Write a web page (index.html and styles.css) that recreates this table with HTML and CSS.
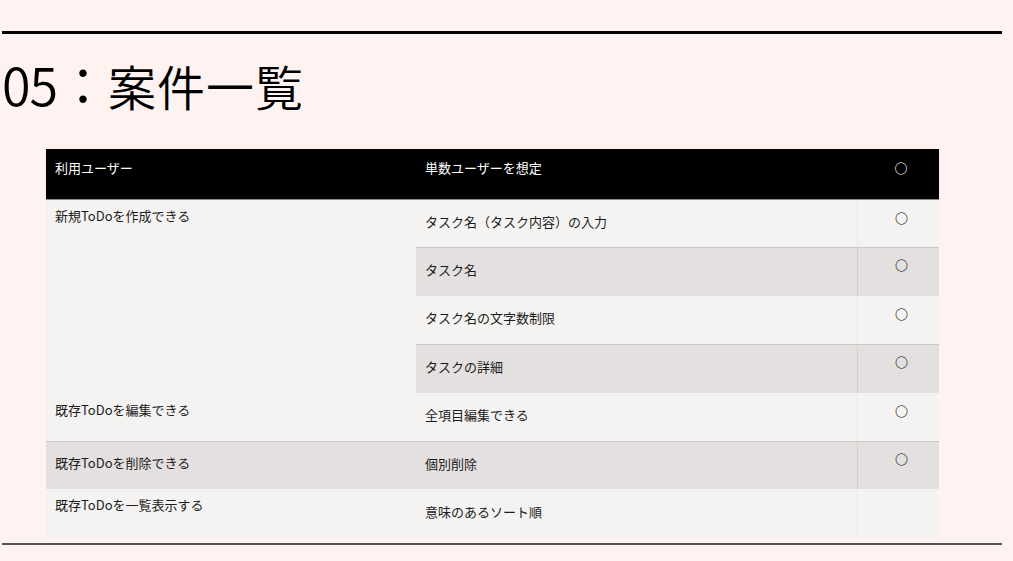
FILE: index.html
```html
<!DOCTYPE html>
<html lang="ja">
<head>
<meta charset="utf-8">
<title>05：案件一覧</title>
<link rel="stylesheet" href="styles.css">
</head>
<body>
<div class="page">
  <div class="rule-top"></div>
  <h1 class="title"><span class="num">05：</span>案件一覧</h1>
  <div class="grid">
    <div class="cell head c1">利用ユーザー</div>
    <div class="cell head c2">単数ユーザーを想定</div>
    <div class="cell head c3">○</div>

    <div class="cell light c1 span4">新規ToDoを作成できる</div>
    <div class="cell light c2">タスク名（タスク内容）の入力</div>
    <div class="cell light c3">○</div>

    <div class="cell dark c2">タスク名</div>
    <div class="cell dark c3">○</div>

    <div class="cell light c2">タスク名の文字数制限</div>
    <div class="cell light c3">○</div>

    <div class="cell dark c2">タスクの詳細</div>
    <div class="cell dark c3">○</div>

    <div class="cell light c1 lower">既存ToDoを編集できる</div>
    <div class="cell light c2">全項目編集できる</div>
    <div class="cell light c3">○</div>

    <div class="cell dark c1 mid">既存ToDoを削除できる</div>
    <div class="cell dark c2">個別削除</div>
    <div class="cell dark c3">○</div>

    <div class="cell light c1">既存ToDoを一覧表示する</div>
    <div class="cell light c2 last">意味のあるソート順</div>
    <div class="cell light c3"></div>
  </div>
  <div class="rule-bottom"></div>
</div>
</body>
</html>
```

FILE: styles.css
```css
html, body {
  margin: 0;
  padding: 0;
  background: #fef3f1;
}

body {
  font-family: "Noto Sans CJK JP", "Noto Sans", sans-serif;
  color: #000;
}

.page {
  width: 1000px;
  padding: 31px 0 0 2px;
}

.rule-top {
  height: 3px;
  background: #000;
}

.title {
  margin: 22px 0 0 0;
  height: 58px;
  font-size: 48px;
  font-weight: 350;
  line-height: 58px;
  letter-spacing: 1px;
  white-space: nowrap;
}

.num {
  font-size: 52px;
  line-height: 0;
  letter-spacing: -1px;
}

.grid {
  margin: 35px 0 0 44px;
  display: grid;
  grid-template-columns: 370px 441px 82px;
  grid-template-rows: 51px 47px 49px 48px 49px 48px 48px 48px;
  font-size: 13px;
  line-height: 19px;
  color: #1c1c1c;
}

.cell {
  box-sizing: border-box;
  padding: 12px 9px 0 9px;
  white-space: nowrap;
}

.head {
  background: #000;
  color: #fff;
  padding-top: 9px;
  border-bottom: 1px solid #8a8886;
}

.light {
  background: #f4f3f1;
}

.dark {
  background: #e3e0df;
  border-top: 1px solid #c9c6c4;
}

.c1 {
  padding-top: 6px;
}

.c1.head {
  padding-top: 9px;
}

.c1.lower {
  padding-top: 7px;
}

.c1.mid {
  padding-top: 11px;
}

.span4 {
  grid-row: span 4;
}

.c2.last {
  padding-top: 13px;
}

.c3 {
  text-align: center;
  padding: 8px 0 0 6px;
  border-left: 1px solid #ebe9e7;
  color: #000;
  font-weight: 700;
}

.c3.head {
  padding-top: 9px;
  border-left: none;
  color: #fff;
}

.c3.dark {
  padding-top: 7px;
  border-left-color: #d3d0ce;
}

.rule-bottom {
  margin-top: 6px;
  height: 2px;
  background: #5a5050;
}
```
